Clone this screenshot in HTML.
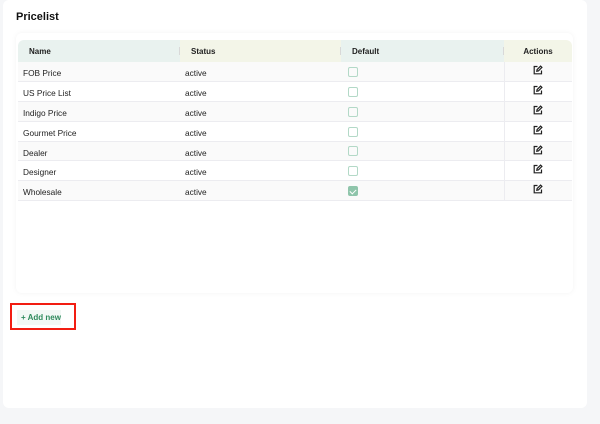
<!DOCTYPE html>
<html><head><meta charset="utf-8"><style>
*{box-sizing:border-box;margin:0;padding:0}
body{width:600px;height:424px;background:#f5f6f8;font-family:"Liberation Sans",sans-serif;position:relative;overflow:hidden}
.card{position:absolute;left:3px;top:0;width:584px;height:408px;background:#fff;border-radius:6px}
h1{position:absolute;left:16px;top:11px;font-size:11px;font-weight:bold;color:#111}
.inner{position:absolute;left:16px;top:33px;width:557px;height:260px;background:#fff;border-radius:6px;box-shadow:0 0 6px rgba(0,0,0,0.05)}
table{position:absolute;left:18px;top:40px;width:554px;border-collapse:collapse;font-size:8.3px;color:#222}
th{height:22px;text-align:left;font-weight:bold;font-size:8px;padding-left:11px;position:relative;color:#222}
th.g{background:#e9f2ef}th.y{background:#f3f5e8}
th:first-child{border-top-left-radius:6px}th:last-child{border-top-right-radius:6px;text-align:center;padding-left:0}
th .sep{position:absolute;right:0;top:7px;width:1px;height:8px;background:#d8d8d8}
td{height:19.8px;padding-left:5px;padding-top:3px;border-bottom:1px solid #ececf0;vertical-align:middle}
tr:nth-child(even) td{background:#fafafa}
td.a{border-left:1px solid #ececf0;text-align:center;padding-left:0;padding-top:0;vertical-align:top}
.cb{display:inline-block;width:10px;height:10px;border:1.3px solid #b3d9c7;border-radius:2px;vertical-align:middle;margin-left:2px;margin-top:-4px;position:relative}
.cb.on{background:#8fc5ab;border-color:#8fc5ab}
.cb.on:after{content:"";position:absolute;left:2px;top:1px;width:3px;height:5px;border:solid #fff;border-width:0 1px 1px 0;transform:rotate(45deg)}
.btn{position:absolute;left:10px;top:303px;width:66px;height:27px;border:2px solid #f21d12}
.btn span{position:absolute;left:5px;top:5px;width:44px;height:15px;background:#f2f8f5;color:#2e8a5c;font-size:8px;font-weight:bold;line-height:15px;padding-left:4px}
</style></head><body>
<div class="card"></div>
<h1>Pricelist</h1>
<div class="inner"></div>
<table>
<tr><th class="g" style="width:162px">Name<i class="sep"></i></th><th class="y" style="width:161px">Status<i class="sep"></i></th><th class="g" style="width:163px">Default<i class="sep"></i></th><th class="y">Actions</th></tr>
<tr><td>FOB Price</td><td>active</td><td><i class="cb"></i></td><td class="a">E</td></tr>
<tr><td>US Price List</td><td>active</td><td><i class="cb"></i></td><td class="a">E</td></tr>
<tr><td>Indigo Price</td><td>active</td><td><i class="cb"></i></td><td class="a">E</td></tr>
<tr><td>Gourmet Price</td><td>active</td><td><i class="cb"></i></td><td class="a">E</td></tr>
<tr><td>Dealer</td><td>active</td><td><i class="cb"></i></td><td class="a">E</td></tr>
<tr><td>Designer</td><td>active</td><td><i class="cb"></i></td><td class="a">E</td></tr>
<tr><td>Wholesale</td><td>active</td><td><i class="cb on"></i></td><td class="a">E</td></tr>
</table>
<div class="btn"><span>+ Add new</span></div>
<script>
document.querySelectorAll('td.a').forEach(function(t){t.innerHTML='<svg width="10" height="10" viewBox="0 0 10 10" style="display:block;margin:3px auto 0"><path d="M4.5 1.5H1.2v7.3h7.3V5.5" fill="none" stroke="#222" stroke-width="1.2"/><path d="M3.8 6.2l.3-1.6L7.6 1.1l1.3 1.3L5.4 5.9z" fill="none" stroke="#222" stroke-width="1.2"/></svg>';});
</script>
</body></html>
